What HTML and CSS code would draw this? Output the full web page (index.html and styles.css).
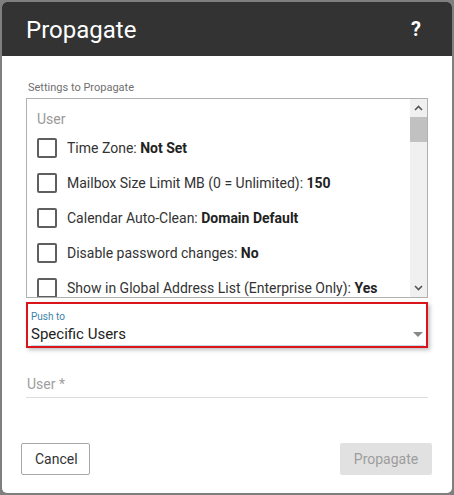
FILE: index.html
```html
<!DOCTYPE html>
<html lang="en">
<head>
    <meta charset="UTF-8">
    <meta name="viewport" content="width=device-width, initial-scale=1.0">
    <title>Propagate</title>
    <link rel="stylesheet" href="styles.css">
</head>
<body>
    <div class="dialog">
        <div class="dialog-header">
            <span class="dialog-title">Propagate</span>
            <span class="help">?</span>
        </div>
        <div class="dialog-body">
            <div class="field-label">Settings to Propagate</div>
            <div class="settings-box">
                <div class="settings-list">
                    <div class="group-title">User</div>
                    <label class="setting"><span class="check"></span>Time Zone:&nbsp;<b>Not Set</b></label>
                    <label class="setting"><span class="check"></span>Mailbox Size Limit MB (0 = Unlimited):&nbsp;<b>150</b></label>
                    <label class="setting"><span class="check"></span>Calendar Auto-Clean:&nbsp;<b>Domain Default</b></label>
                    <label class="setting"><span class="check"></span>Disable password changes:&nbsp;<b>No</b></label>
                    <label class="setting"><span class="check"></span>Show in Global Address List (Enterprise Only):&nbsp;<b>Yes</b></label>
                </div>
                <div class="scrollbar">
                    <svg class="arrow" width="9" height="6" viewBox="0 0 9 6"><path d="M1 5 L4.5 1.5 L8 5" fill="none" stroke="#555" stroke-width="1.6"/></svg>
                    <div class="track"><div class="thumb"></div></div>
                    <svg class="arrow" width="9" height="6" viewBox="0 0 9 6"><path d="M1 1 L4.5 4.5 L8 1" fill="none" stroke="#555" stroke-width="1.6"/></svg>
                </div>
            </div>
            <div class="push-to">
                <div class="push-label">Push to</div>
                <div class="push-value">
                    <span>Specific Users</span>
                    <span class="caret"></span>
                </div>
            </div>
            <div class="user-field">User *</div>
        </div>
        <div class="dialog-footer">
            <button class="btn btn-cancel">Cancel</button>
            <button class="btn btn-primary" disabled>Propagate</button>
        </div>
    </div>
</body>
</html>
```

FILE: styles.css
```css
html, body {
    margin: 0;
    height: 100%;
}
body {
    background-color: #7f7f7f;
    padding: 2px;
    box-sizing: border-box;
    font-family: Roboto, "Liberation Sans", sans-serif;
}
.dialog {
    width: 450px;
    height: 491px;
    background-color: white;
    border-radius: 5px;
    display: flex;
    flex-direction: column;
    overflow: hidden;
}
.dialog-header {
    height: 54px;
    background-color: #333333;
    color: white;
    display: flex;
    align-items: center;
    justify-content: space-between;
    padding: 0 31px 0 24px;
    flex-shrink: 0;
}
.dialog-title {
    font-size: 24px;
    margin-top: 2px;
}
.help {
    font-size: 20px;
    font-weight: bold;
}
.dialog-body {
    padding: 25px 24px 0 24px;
    flex: 1;
}
.field-label {
    font-size: 11px;
    color: #707070;
    margin-left: 2px;
    height: 17px;
}
.settings-box {
    border: 1px solid #b0b0b0;
    height: 198px;
    display: flex;
    overflow: hidden;
}
.settings-list {
    flex: 1;
    padding: 11px 0 0 10px;
}
.group-title {
    font-size: 14px;
    color: #999;
    height: 19px;
    line-height: 19px;
}
.setting {
    display: flex;
    align-items: center;
    height: 35px;
    font-size: 14px;
    color: #333;
    white-space: nowrap;
}
.setting:first-of-type {
    margin-top: 1px;
}
.setting b {
    font-weight: bold;
    color: #222;
}
.check {
    width: 16px;
    height: 16px;
    border: 2px solid #5f5f5f;
    border-radius: 2px;
    margin-right: 10px;
    flex-shrink: 0;
}
.scrollbar {
    width: 17px;
    background-color: #f0f0f0;
    display: flex;
    flex-direction: column;
    align-items: center;
}
.arrow {
    margin: 6px 0;
}
.track {
    flex: 1;
    width: 100%;
}
.thumb {
    height: 25px;
    background-color: #c1c1c1;
}
.push-to {
    margin-top: 4px;
    border: 2px solid #d9141b;
    height: 42px;
    box-shadow: 2px 2px 4px rgba(0, 0, 0, 0.25);
    padding: 0 2px 0 3px;
}
.push-label {
    font-size: 10px;
    color: #3a82a8;
    margin-top: 7px;
    height: 12px;
}
.push-value {
    display: flex;
    justify-content: space-between;
    align-items: center;
    font-size: 15px;
    color: #222;
    height: 22px;
    border-bottom: 1px solid #c9d9e3;
}
.caret {
    width: 0;
    height: 0;
    border-left: 5px solid transparent;
    border-right: 5px solid transparent;
    border-top: 5px solid #888;
    margin-right: 1px;
}
.user-field {
    margin-top: 28px;
    font-size: 14px;
    color: #9e9e9e;
    padding-left: 1px;
    height: 21px;
    border-bottom: 1px solid #ddd;
}
.dialog-footer {
    display: flex;
    justify-content: space-between;
    padding: 0 20px 18px 19px;
}
.btn {
    height: 32px;
    font-family: Roboto, "Liberation Sans", sans-serif;
    font-size: 14px;
    border-radius: 2px;
    padding: 0 13px;
}
.btn-cancel {
    background-color: white;
    border: 1px solid #a8a8a8;
    color: #333;
    width: 69px;
}
.btn-primary {
    background-color: #e1e1e1;
    border: none;
    color: #9d9d9d;
    width: 92px;
}
```
